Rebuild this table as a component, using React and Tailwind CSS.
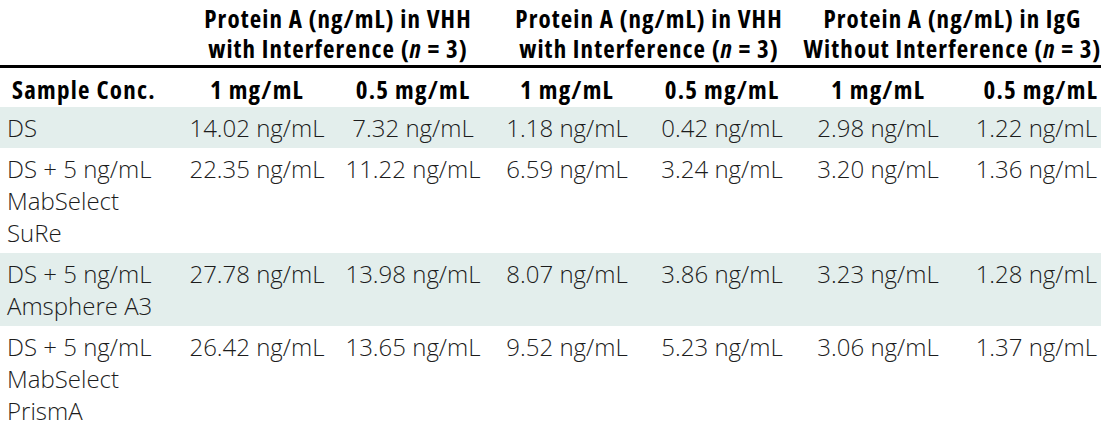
const groups = [
  ["Protein A (ng/mL) in VHH", "with Interference"],
  ["Protein A (ng/mL) in VHH", "with Interference"],
  ["Protein A (ng/mL) in IgG", "Without Interference"],
];

const rows = [
  { label: ["DS"], vals: ["14.02", "7.32", "1.18", "0.42", "2.98", "1.22"], shaded: true },
  { label: ["DS + 5 ng/mL", "MabSelect", "SuRe"], vals: ["22.35", "11.22", "6.59", "3.24", "3.20", "1.36"] },
  { label: ["DS + 5 ng/mL", "Amsphere A3"], vals: ["27.78", "13.98", "8.07", "3.86", "3.23", "1.28"], shaded: true },
  { label: ["DS + 5 ng/mL", "MabSelect", "PrismA"], vals: ["26.42", "13.65", "9.52", "5.23", "3.06", "1.37"] },
];

const head = { fontFamily: '"Open Sans", "Liberation Sans", sans-serif', fontStretch: "75%" };
const body = { fontFamily: '"Open Sans", "Liberation Sans", sans-serif' };

function App() {
  return (
    <div className="w-[1101px] h-[429px] bg-white overflow-hidden">
      <table className="table-fixed w-[1101px] border-collapse text-[#1c1c1c]">
        <colgroup>
          <col className="w-[182px]" />
          <col className="w-[150px]" />
          <col className="w-[162px]" />
          <col className="w-[146px]" />
          <col className="w-[164px]" />
          <col className="w-[148px]" />
          <col className="w-[149px]" />
        </colgroup>
        <thead style={head} className="font-bold text-[25px] leading-[30px] tracking-[0.05em] text-black">
          <tr className="border-b-[3px] border-black tracking-[0.044em]">
            <th className="pt-[3px] pb-[2px]"></th>
            {groups.map((g, i) => (
              <th key={i} colSpan={2} className="p-0 pt-[3px] pb-[2px] align-bottom font-bold">
                <div className="flex flex-col items-center">
                  <span className="whitespace-nowrap">{g[0]}</span>
                  <span className="whitespace-nowrap">
                    {g[1]} (<i>n</i> = 3)
                  </span>
                </div>
              </th>
            ))}
          </tr>
          <tr>
            <th className="pt-[6px] pb-[3px] pl-[12px] text-left whitespace-nowrap">Sample Conc.</th>
            {["1 mg/mL", "0.5 mg/mL", "1 mg/mL", "0.5 mg/mL", "1 mg/mL", "0.5 mg/mL"].map((t, i) => (
              <th
                key={i}
                className={`pt-[6px] pb-[3px] whitespace-nowrap ${i === 5 ? "text-right pr-[3px]" : "text-center"}`}
              >
                {t}
              </th>
            ))}
          </tr>
        </thead>
        <tbody style={body} className="font-light text-[24px] leading-[32px]">
          {rows.map((r, i) => (
            <tr key={i} className={r.shaded ? "bg-[#e3eeec]" : "bg-white"}>
              <td className="pt-[5px] pb-[4px] pl-[7px] align-top">
                {r.label.map((l, j) => (
                  <div key={j} className="whitespace-nowrap">{l}</div>
                ))}
              </td>
              {r.vals.map((v, j) => (
                <td
                  key={j}
                  className={`pt-[5px] pb-[4px] align-top whitespace-nowrap ${j === 5 ? "text-right pr-[4px]" : "text-center"}`}
                >
                  {v} ng/mL
                </td>
              ))}
            </tr>
          ))}
        </tbody>
      </table>
    </div>
  );
}

export default App;
